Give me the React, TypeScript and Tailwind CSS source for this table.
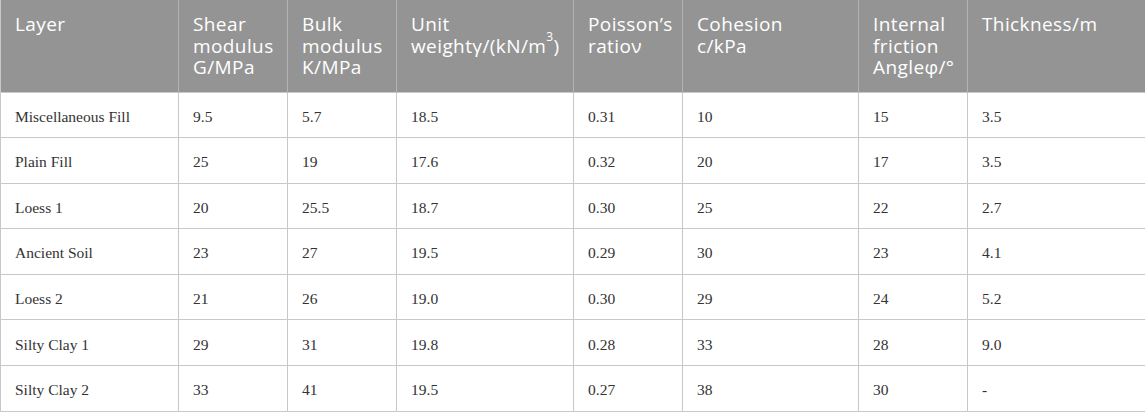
const headers: React.ReactNode[] = [
  "Layer",
  <>Shear<br />modulus<br />G/MPa</>,
  <>Bulk<br />modulus<br />K/MPa</>,
  <>Unit<br />weightγ/(kN/m<sup className="text-[12px] align-[6px]">3</sup>)</>,
  <>Poisson’s<br />ratioν</>,
  <>Cohesion<br />c/kPa</>,
  <>Internal<br />friction<br />Angleφ/°</>,
  "Thickness/m",
];

const widths = [178, 109, 109, 177, 109, 176, 109, 178];

const rows = [
  ["Miscellaneous Fill", "9.5", "5.7", "18.5", "0.31", "10", "15", "3.5"],
  ["Plain Fill", "25", "19", "17.6", "0.32", "20", "17", "3.5"],
  ["Loess 1", "20", "25.5", "18.7", "0.30", "25", "22", "2.7"],
  ["Ancient Soil", "23", "27", "19.5", "0.29", "30", "23", "4.1"],
  ["Loess 2", "21", "26", "19.0", "0.30", "29", "24", "5.2"],
  ["Silty Clay 1", "29", "31", "19.8", "0.28", "33", "28", "9.0"],
  ["Silty Clay 2", "33", "41", "19.5", "0.27", "38", "30", "-"],
];

export default function App() {
  return (
    <div className="w-[1145px] h-[412px] bg-white overflow-hidden">
      <table className="w-[1145px] table-fixed border-collapse">
        <colgroup>
          {widths.map((w, i) => (
            <col key={i} style={{ width: w }} />
          ))}
        </colgroup>
        <thead>
          <tr className="h-[92px] bg-[#949494]">
            {headers.map((h, i) => (
              <th
                key={i}
                className="align-top text-left font-normal text-white text-[19px] leading-[21.7px] tracking-[0.4px] whitespace-nowrap pl-[14px] pr-0 pt-[14px] border-x border-[#b4b4b4] first:border-l-[#c8c8c8] last:border-r-[#c8c8c8] font-['Open_Sans',sans-serif]"
              >
                {h}
              </th>
            ))}
          </tr>
        </thead>
        <tbody>
          {rows.map((r, ri) => (
            <tr key={ri} className="h-[45.6px]">
              {r.map((c, ci) => (
                <td
                  key={ci}
                  className="border border-[#c8c8c8] px-[14px] pt-[3px] align-middle text-[15.5px] text-[#333333] font-['Liberation_Serif',serif]"
                >
                  {c}
                </td>
              ))}
            </tr>
          ))}
        </tbody>
      </table>
    </div>
  );
}
